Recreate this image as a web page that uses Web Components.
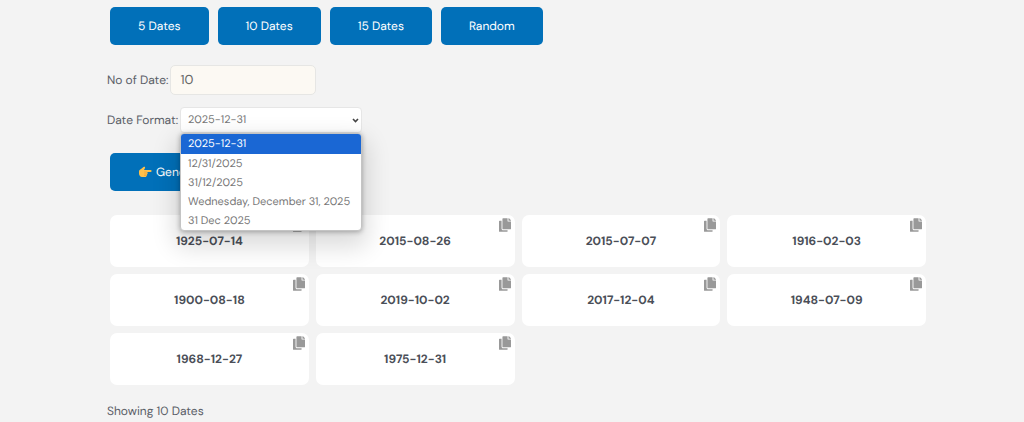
<!DOCTYPE html>
<html lang="en">
<head>
<meta charset="utf-8">
<meta name="viewport" content="width=device-width, initial-scale=1">
<title>Random Date Generator</title>
<style>
body {
  margin: 0;
  background: #f3f3f3;
  color: #5b6068;
  font: 12px/20px "DM Sans", Inter, "Liberation Sans", sans-serif;
  font-variation-settings: "opsz" 14;
  text-rendering: geometricPrecision;
}
</style>
</head>
<body>
<date-generator></date-generator>

<template id="action-button">
<style>
:host {
  display: block;
  min-width: 98px;
}
button {
  width: 100%;
  height: 38px;
  padding: 0 28px;
  border: 0;
  border-radius: 5px;
  background: #0170b9;
  color: #fff;
  font: inherit;
  font-variation-settings: inherit;
  text-rendering: inherit;
  cursor: pointer;
  display: flex;
  align-items: center;
  justify-content: center;
  gap: 4px;
  white-space: nowrap;
}
</style>
<button type="button"><slot name="icon"></slot><slot></slot></button>
</template>

<template id="number-field">
<style>
:host { display: block; }
div {
  display: flex;
  align-items: center;
  gap: 2px;
}
input {
  box-sizing: border-box;
  width: 146px;
  height: 30px;
  padding: 0 9px;
  border: 1px solid #e6e6e4;
  border-radius: 5px;
  background: #fcf9f3;
  color: #666;
  font: inherit;
  font-size: 13px;
  font-variation-settings: inherit;
  text-rendering: inherit;
}
</style>
<div>
  <label for="count"><slot></slot></label>
  <input id="count" type="text" inputmode="numeric">
</div>
</template>

<template id="format-select">
<style>
:host { display: block; }
.row {
  display: flex;
  align-items: center;
  gap: 2px;
}
.control {
  position: relative;
  display: grid;
  align-items: center;
  width: 182px;
}
select, svg { grid-area: 1 / 1; }
select {
  appearance: none;
  height: 26px;
  padding: 0 7px;
  border: 1px solid #e6e6e6;
  border-radius: 4px;
  background: #fff;
  color: #777;
  font: inherit;
  font-size: 11px;
  font-variation-settings: inherit;
  text-rendering: inherit;
}
svg {
  justify-self: end;
  width: 7px;
  height: 5px;
  margin-right: 3px;
  pointer-events: none;
}
/* the open list floats over the rest of the page */
ul {
  position: absolute;
  top: 100%;
  left: 0;
  right: 0;
  z-index: 1;
  margin: 0;
  padding: 0;
  border: 1px solid #c4c4c4;
  border-radius: 4px;
  overflow: hidden;
  background: #fff;
  list-style: none;
  font-size: 11px;
  line-height: 17px;
  box-shadow: 0 1px 5px rgba(0, 0, 0, .3), 0 11px 24px 5px rgba(0, 0, 0, .14);
}
li {
  padding: 2px 7px 0;
  color: #777;
  white-space: nowrap;
}
li[aria-selected="true"] {
  padding-bottom: 1px;
  background: #1a67d4;
  color: #fff;
}
</style>
<div class="row">
  <label for="format"><slot></slot></label>
  <div class="control">
    <select id="format"></select>
    <svg viewBox="0 0 7 5" aria-hidden="true"><path d="M1 1l2.500 2.500L6 1" fill="none" stroke="#444" stroke-width="1.600"/></svg>
    <ul role="listbox" aria-label="Date formats"></ul>
  </div>
</div>
</template>

<template id="date-card">
<style>
:host {
  display: flex;
  align-items: center;
  justify-content: center;
  position: relative;
  height: 52px;
  border-radius: 7px;
  background: #fff;
  color: #4b4f58;
  font-weight: 700;
}
button {
  position: absolute;
  top: 3px;
  right: 4px;
  padding: 0;
  border: 0;
  background: none;
  color: #999;
  cursor: pointer;
}
svg {
  display: block;
  width: 12px;
  height: 14px;
}
</style>
<slot></slot>
<button type="button" aria-label="Copy">
  <svg viewBox="0 0 448 512" fill="currentColor"><path d="M320 448v40c0 13.255-10.745 24-24 24H24c-13.255 0-24-10.745-24-24V120c0-13.255 10.745-24 24-24h72v296c0 30.879 25.121 56 56 56h168zm0-344V0H152c-13.255 0-24 10.745-24 24v368c0 13.255 10.745 24 24 24h272c13.255 0 24-10.745 24-24V128H344c-13.200 0-24-10.800-24-24zm120.971-31.029L375.029 7.029A24 24 0 0 0 358.059 0H352v96h96v-6.059a24 24 0 0 0-7.029-16.970z"/></svg>
</button>
</template>

<template id="date-generator">
<style>
:host {
  display: block;
  padding: 7px 95px 0 107px;
}
.presets {
  display: flex;
  gap: 9px;
  margin: 0 3px 20px;
}
number-field { margin-bottom: 12px; }
.generate {
  display: flex;
  margin: 20px 3px 24px;
}
.hand {
  width: 14px;
  height: 14px;
}
.dates {
  display: grid;
  grid-template-columns: repeat(4, 1fr);
  gap: 7px;
  margin: 0 3px;
}
p { margin: 16px 0 0; }
</style>
<div class="presets">
  <action-button>5 Dates</action-button>
  <action-button>10 Dates</action-button>
  <action-button>15 Dates</action-button>
  <action-button>Random</action-button>
</div>
<number-field value="10">No of Date:</number-field>
<format-select>Date Format:</format-select>
<div class="generate">
  <action-button>
    <svg slot="icon" class="hand" viewBox="0 0 28 28" aria-hidden="true">
      <path d="M2 13c0-3 2-4 4-5l5-4c2-1 4 0 3 2l-2 4h13c3 0 3 4 0 4h-7c2 1 2 4 0 4 1 2 0 3-1 3 0 2-1 3-3 3H8c-4 0-6-4-6-7z" fill="#ffc04a"/>
      <path d="M17 14h-4M17 18h-4M16 21h-3" fill="none" stroke="#e79a35" stroke-width="1.200" stroke-linecap="round"/>
    </svg>Generate
  </action-button>
</div>
<div class="dates"></div>
<p></p>
</template>

<script>
const formats = [
  "2025-12-31",
  "12/31/2025",
  "31/12/2025",
  "Wednesday, December 31, 2025",
  "31 Dec 2025",
];

const dates = [
  "1925-07-14", "2015-08-26", "2015-07-07", "1916-02-03",
  "1900-08-18", "2019-10-02", "2017-12-04", "1948-07-09",
  "1968-12-27", "1975-12-31",
];

class BaseElement extends HTMLElement {
  constructor() {
    super();
    const root = this.attachShadow({ mode: "open" });
    const template = document.getElementById(this.localName);
    root.appendChild(template.content.cloneNode(true));
  }
}

class ActionButton extends BaseElement {}

class NumberField extends BaseElement {
  connectedCallback() {
    this.shadowRoot.querySelector("input").value = this.getAttribute("value");
  }
}

class FormatSelect extends BaseElement {
  connectedCallback() {
    const select = this.shadowRoot.querySelector("select");
    const list = this.shadowRoot.querySelector("ul");
    formats.forEach((format, i) => {
      select.add(new Option(format));
      const item = document.createElement("li");
      item.setAttribute("role", "option");
      item.setAttribute("aria-selected", String(i === 0));
      item.textContent = format;
      item.addEventListener("click", () => {
        select.selectedIndex = i;
        list.style.display = "none";
      });
      list.appendChild(item);
    });
  }
}

class DateCard extends BaseElement {
  connectedCallback() {
    this.shadowRoot.querySelector("button").addEventListener("click", () => {
      navigator.clipboard.writeText(this.textContent);
    });
  }
}

class DateGenerator extends BaseElement {
  connectedCallback() {
    const grid = this.shadowRoot.querySelector(".dates");
    dates.forEach((date) => {
      const card = document.createElement("date-card");
      card.textContent = date;
      grid.appendChild(card);
    });
    this.shadowRoot.querySelector("p").textContent = `Showing ${dates.length} Dates`;
  }
}

customElements.define("action-button", ActionButton);
customElements.define("number-field", NumberField);
customElements.define("format-select", FormatSelect);
customElements.define("date-card", DateCard);
customElements.define("date-generator", DateGenerator);
</script>
</body>
</html>
